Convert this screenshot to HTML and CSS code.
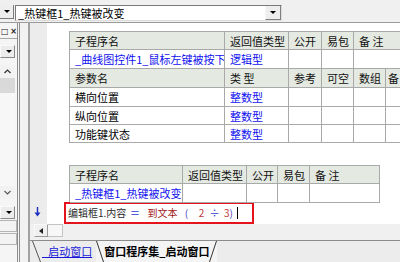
FILE: index.html
```html
<!DOCTYPE html>
<html lang="zh-CN">
<head>
<meta charset="utf-8">
<title>易语言</title>
<link rel="stylesheet" href="styles.css">
</head>
<body>
<div class="app">
  <div class="toolbar">
    <div class="ddbtn"><span class="tri"></span></div>
    <div class="combo">
      <span class="combo-text">_热键框1_热键被改变</span>
      <div class="combo-btn"><span class="tri"></span></div>
    </div>
  </div>
  <div class="main">
    <div class="side">
      <div class="panel">
        <div class="cap"><span class="cap-btn">□</span><span class="cap-btn">×</span></div>
        <div class="pdd"><span class="tri"></span></div>
        <div class="vscroll">
          <div class="sbtn"><svg width="7" height="5" viewBox="0 0 7 5"><polyline points="0.5,4 3.5,1 6.5,4" fill="none" stroke="#333" stroke-width="1.2"/></svg></div>
          <div class="thumb"></div>
          <div class="track"></div>
          <div class="sbtn"><svg width="7" height="5" viewBox="0 0 7 5"><polyline points="0.5,1 3.5,4 6.5,1" fill="none" stroke="#555" stroke-width="1.1"/></svg></div>
        </div>
        <div class="pdd pdd-low"><span class="tri"></span></div>
        <div class="pbox"></div>
        <div class="pbox"></div>
      </div>
      <div class="splitter"></div>
    </div>
    <div class="work">
      <div class="editor">
        <div class="gutter">
          <svg class="flow-arrow" width="7" height="10" viewBox="0 0 7 10"><line x1="3.5" y1="0" x2="3.5" y2="8" stroke="#1c2fc4" stroke-width="1.4"/><polygon points="0.5,5.5 6.5,5.5 3.5,9.5" fill="#1c2fc4"/></svg>
        </div>
        <div class="code">
          <div class="tbl t1">
            <div class="tr r-a hd"><div>子程序名</div><div>返回值类型</div><div>公开</div><div>易包</div><div>备 注</div></div>
            <div class="tr r-a r19"><div class="link">_曲线图控件1_鼠标左键被按下</div><div class="link">逻辑型</div><div></div><div></div><div></div></div>
            <div class="tr r-b hd r19"><div>参数名</div><div>类 型</div><div>参考</div><div>可空</div><div>数组</div><div class="tight">备</div></div>
            <div class="tr r-b r19"><div>横向位置</div><div class="link">整数型</div><div></div><div></div><div></div><div></div></div>
            <div class="tr r-b"><div>纵向位置</div><div class="link">整数型</div><div></div><div></div><div></div><div></div></div>
            <div class="tr r-b"><div>功能键状态</div><div class="link">整数型</div><div></div><div></div><div></div><div></div></div>
          </div>
          <div class="tbl t2">
            <div class="tr r-c hd"><div>子程序名</div><div>返回值类型</div><div>公开</div><div>易包</div><div>备 注</div></div>
            <div class="tr r-c r19"><div class="link">_热键框1_热键被改变</div><div></div><div></div><div></div><div></div></div>
          </div>
          <div class="codeline">
            <span class="tok s-obj c-obj">编辑框1.内容</span>
            <span class="tok s-eq c-op">＝</span>
            <span class="tok s-cmd c-cmd">到文本</span>
            <span class="tok s-lp c-br">(</span>
            <span class="tok s-n2 c-num">2</span>
            <span class="tok s-div c-op">÷</span>
            <span class="tok s-n3"><span class="c-num">3</span><span class="c-br">)</span><span class="caret"></span></span>
          </div>
        </div>
      </div>
      <div class="hscroll">
        <div class="hbtn"><svg width="4" height="6" viewBox="0 0 4 6"><polygon points="4,0 4,6 0,3" fill="#222"/></svg></div>
        <div class="hthumb"></div>
      </div>
      <div class="tabs">
        <div class="tab tab1">
          <svg class="slant" width="9" height="21" viewBox="0 0 9 21"><line x1="0.5" y1="0" x2="8.5" y2="21" stroke="#555" stroke-width="1"/></svg>
          <span class="tab-label link-u">_启动窗口</span>
        </div>
        <div class="tab tab2">
          <svg class="slant" width="8" height="21" viewBox="0 0 8 21"><line x1="0.5" y1="0" x2="7.5" y2="21" stroke="#333" stroke-width="1"/></svg>
          <span class="tab-label bold">窗口程序集_启动窗口</span>
          <svg class="slant" width="8" height="21" viewBox="0 0 8 21"><line x1="0.5" y1="21" x2="7.5" y2="0" stroke="#333" stroke-width="1"/></svg>
        </div>
      </div>
    </div>
  </div>
</div>
</body>
</html>
```
FILE: styles.css
```css
* { box-sizing: border-box; }
html, body { margin: 0; padding: 0; }
body {
  width: 400px;
  height: 262px;
  overflow: hidden;
  background: #f0f0f0;
  font-family: "Noto Sans CJK SC", "Liberation Sans", sans-serif;
  font-size: 11px;
  color: #000;
}
.app { width: 400px; height: 262px; display: flex; flex-direction: column; }

/* toolbar */
.toolbar {
  height: 23px;
  border-bottom: 1px solid #9a9a9a;
  display: flex;
  align-items: flex-start;
  padding-top: 5px;
  background: #f0f0f0;
}
.tri {
  display: block;
  width: 0; height: 0;
  border-left: 3px solid transparent;
  border-right: 3px solid transparent;
  border-top: 3px solid #000;
}
.ddbtn {
  width: 14px; height: 14px;
  display: flex; align-items: center; justify-content: center;
  border-right: 1px solid #7c7c7c;
  border-bottom: 1px solid #7c7c7c;
  background: #eeeeee;
}
.combo {
  margin-left: 1px;
  width: 267px; height: 16px;
  border: 1px solid;
  border-color: #7a7a7a #dcdcdc #dcdcdc #7a7a7a;
  background: #fff;
  display: flex;
  align-items: center;
}
.combo-text { padding-left: 2px; line-height: 14px; white-space: nowrap; }
.combo-btn {
  margin-left: auto;
  width: 16px; height: 14px;
  background: #eeeeee;
  border-left: 1px solid #f8f8f8;
  border-right: 1px solid #808080;
  border-bottom: 1px solid #808080;
  display: flex; align-items: center; justify-content: center;
}

/* main */
.main { flex: 1; display: flex; min-height: 0; }
.side { width: 28px; display: flex; }
.panel {
  width: 20px;
  border-right: 3px double #8e8e8e;
  background: #f5f5f5;
  display: flex;
  flex-direction: column;
}
.cap {
  height: 16px;
  border-bottom: 1px solid #a6a6a6;
  display: flex;
  justify-content: space-between;
  align-items: flex-start;
  padding: 4px 0 0 1px;
  font-size: 8px;
  line-height: 9px;
  font-family: "DejaVu Sans", sans-serif;
  color: #222;
}
.cap-btn { display: block; width: 7px; text-align: center; font-weight: bold; }
.pdd {
  margin-top: 6px;
  width: 15px; height: 13px;
  border: 1px solid;
  border-color: #fafafa #8a8a8a #8a8a8a #fafafa;
  background: #ececec;
  display: flex; align-items: center; justify-content: center;
  padding-left: 2px;
}
.pdd-low { margin-top: 7px; }
.vscroll {
  margin-top: 7px;
  width: 15px; height: 134px;
  display: flex; flex-direction: column;
  background: #f7f7f7;
}
.sbtn {
  height: 13px;
  background: #f2f2f2;
  display: flex; align-items: center; justify-content: center;
}
.thumb { height: 15px; background: #d9d9d9; }
.track { flex: 1; }
.pbox {
  margin-top: 1px;
  width: 17px; height: 12px;
  border: 1px solid #b4b4b4;
  border-left: none;
  background: #f3f3f3;
}
.splitter { width: 8px; background: #f2f2f2; }

.work {
  flex: 1;
  border-left: 2px solid #a2a2a2;
  display: flex;
  flex-direction: column;
  min-width: 0;
}
.editor { height: 201px; display: flex; }
.gutter {
  width: 17px;
  background: #ececec;
  display: flex;
  flex-direction: column;
  padding-left: 4px;
}
.flow-arrow { display: block; margin-top: 184px; }
.code { flex: 1; background: #fff; overflow: hidden; min-width: 0; }

/* tables */
.tbl {
  width: max-content;
  border-top: 1px solid #a9a9a9;
  border-left: 1px solid #a9a9a9;
}
.t1 { margin: 8px 0 0 22px; }
.t2 { margin: 22px 0 0 22px; }
.tr { display: grid; height: 18px; }
.tr.r19 { height: 19px; }
.tr > div {
  border-right: 1px solid #a9a9a9;
  border-bottom: 1px solid #a9a9a9;
  padding-left: 5px;
  display: flex;
  align-items: center;
  white-space: nowrap;
  overflow: hidden;
  line-height: 12px;
}
.tr > div.tight { padding-left: 2px; }
.r-a { grid-template-columns: 155px 64px 33px 32px 120px; }
.r-b { grid-template-columns: 155px 64px 33px 32px 32px 60px; }
.r-c { grid-template-columns: 113px 64px 31px 32px 70px; }
.hd > div { background: #e4e9e1; color: #111; }
.link { color: #1010f0; }

/* code line */
.codeline {
  margin: -1px 0 0 17px;
  width: 190px; height: 22px;
  border: 2px solid #e5141c;
  display: flex;
  align-items: center;
  padding-left: 2px;
  font-size: 10px;
  white-space: nowrap;
  line-height: 12px;
}
.tok { display: flex; justify-content: center; align-items: center; flex: none; }
.s-obj { width: 58px; justify-content: flex-start; }
.s-eq { width: 18px; }
.s-cmd { width: 37px; }
.s-lp { width: 11px; }
.s-n2 { width: 19px; }
.s-div { width: 7px; }
.s-n3 { width: 26px; }
.c-obj { color: #2a2a2a; }
.c-op { color: #2c3ad0; }
.c-cmd { color: #a3161a; }
.c-br { color: #4a3cc0; }
.c-num { color: #c0393c; }
.caret { width: 1px; height: 12px; background: #000; margin-left: 4px; }

/* horizontal scrollbar */
.hscroll {
  height: 14px;
  display: flex;
  padding-left: 4px;
  background: #f0f0f0;
}
.hbtn {
  width: 14px; height: 13px;
  border: 1px solid;
  border-color: #fafafa #9a9a9a #9a9a9a #fafafa;
  display: flex; align-items: center; justify-content: center;
}
.hthumb {
  width: 15px; height: 13px;
  border: 1px solid #c4c4c4;
  border-left: none;
  background: #f7f7f7;
}

/* tabs */
.tabs {
  margin-top: 2px;
  flex: 1;
  border-top: 1px solid #8c8c8c;
  display: flex;
  padding-left: 2px;
  background: #ececec;
}
.tab { display: flex; align-items: flex-start; height: 21px; }
.slant { display: block; flex: none; }
.tab-label { line-height: 21px; white-space: nowrap; }
.tab1 .tab-label { padding: 0 4px 0 1px; }
.link-u { color: #1818d8; text-decoration: underline; }
.tab2 { background: #f4f4f4; }
.bold { font-weight: bold; color: #000; }
```
